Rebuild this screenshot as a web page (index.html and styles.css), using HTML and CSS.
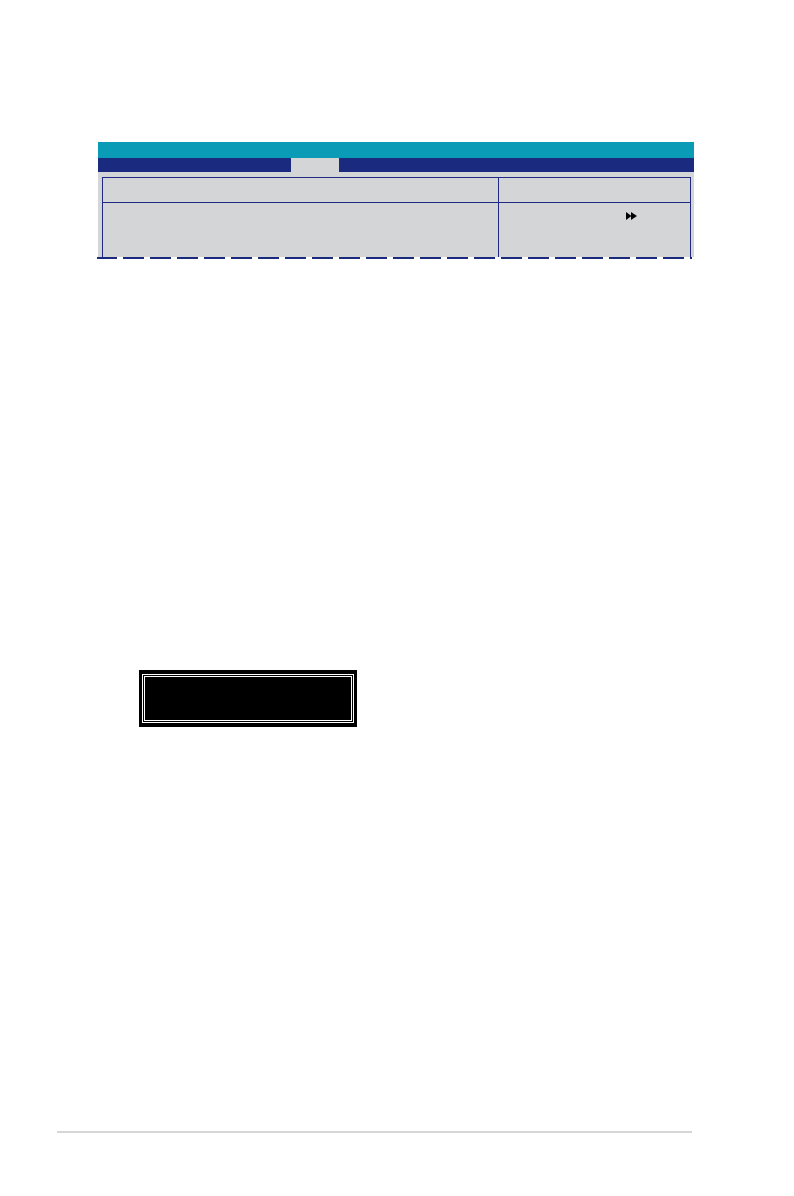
FILE: index.html
```html
<!DOCTYPE html>
<html>
<head>
<meta charset="utf-8">
<link rel="stylesheet" href="styles.css">
</head>
<body>
<div class="panel">
  <div class="title-bar"></div>
  <div class="menu-bar">
    <div class="menu-fill menu-left"></div>
    <div class="menu-tab"></div>
    <div class="menu-fill menu-right"></div>
  </div>
  <div class="body-area">
    <div class="table">
      <div class="row row-head">
        <div class="cell cell-main"></div>
        <div class="cell cell-side"></div>
      </div>
      <div class="row row-content">
        <div class="cell cell-main"></div>
        <div class="cell cell-side">
          <svg class="ff-icon" width="11" height="8" viewBox="0 0 11 8" aria-hidden="true">
            <polygon points="0,0 5.5,4 0,8" fill="#000"/>
            <polygon points="5,0 11,4 5,8" fill="#000"/>
          </svg>
        </div>
      </div>
    </div>
  </div>
  <div class="torn-edge"></div>
</div>

<div class="screen-box">
  <div class="screen-frame"></div>
</div>

<div class="footer-rule"></div>
</body>
</html>
```

FILE: styles.css
```css
html, body {
  margin: 0;
  padding: 0;
  background: #ffffff;
  font-family: "Liberation Sans", Arial, sans-serif;
}

.panel {
  margin: 142px 0 0 98px;
  width: 596px;
  display: flex;
  flex-direction: column;
}

.title-bar {
  height: 16px;
  background: #0a9bb7;
}

.menu-bar {
  display: flex;
  height: 14px;
}

.menu-fill {
  background: #1a2a7f;
}

.menu-left {
  width: 193px;
}

.menu-tab {
  width: 48px;
  background: #d4d5d7;
}

.menu-right {
  flex: 1;
}

.body-area {
  background: #d4d5d7;
  padding: 5px 3px 0 4px;
}

.table {
  border: 1px solid #1f2a86;
  border-bottom: none;
  display: flex;
  flex-direction: column;
}

.row {
  display: flex;
}

.row-head {
  height: 24px;
  border-bottom: 1px solid #1f2a86;
}

.row-content {
  height: 54px;
}

.cell-main {
  width: 395px;
  border-right: 1px solid #1f2a86;
}

.cell-side {
  flex: 1;
  position: relative;
}

.ff-icon {
  display: block;
  margin: 9px 0 0 127px;
}

.torn-edge {
  height: 2px;
  margin-left: -1px;
  margin-right: 2px;
  background: repeating-linear-gradient(
    to right,
    #1a2a7f 0,
    #1a2a7f 21px,
    #ffffff 21px,
    #ffffff 27px
  );
  background-position: -1px 0;
}

.screen-box {
  margin: 411px 0 0 139px;
  width: 218px;
  height: 57px;
  box-sizing: border-box;
  background: #000000;
  padding: 4px 3px 4px 3px;
}

.screen-frame {
  height: 100%;
  box-sizing: border-box;
  border: 3px double #ffffff;
}

.footer-rule {
  margin: 404px 0 0 57px;
  width: 635px;
  height: 2px;
  background: #d6d6d6;
}
```
